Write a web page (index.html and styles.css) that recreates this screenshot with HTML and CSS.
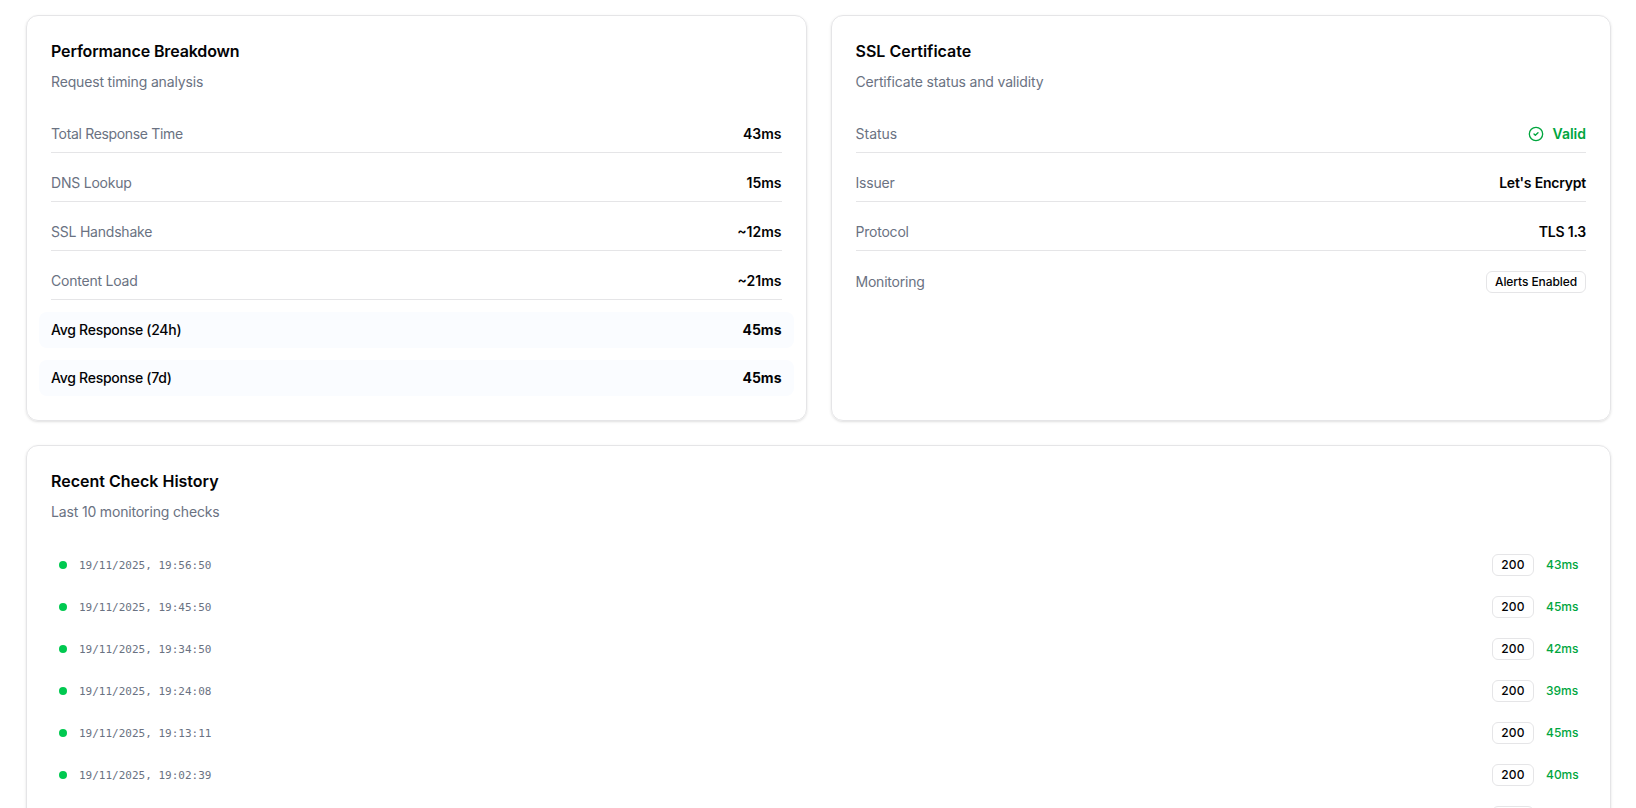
FILE: index.html
```html
<!DOCTYPE html>
<html lang="en">
<head>
    <meta charset="UTF-8">
    <meta name="viewport" content="width=device-width, initial-scale=1.0">
    <title>Monitor Details</title>
    <link rel="stylesheet" href="styles.css">
</head>
<body>
    <main>
        <div class="card-grid">
            <section class="card">
                <h2 class="tight">Performance Breakdown</h2>
                <p class="description">Request timing analysis</p>
                <div class="rows">
                    <div class="row line">
                        <span class="label narrow">Total Response Time</span>
                        <span class="value">43ms</span>
                    </div>
                    <div class="row line">
                        <span class="label">DNS Lookup</span>
                        <span class="value">15ms</span>
                    </div>
                    <div class="row line">
                        <span class="label">SSL Handshake</span>
                        <span class="value">~12ms</span>
                    </div>
                    <div class="row line">
                        <span class="label">Content Load</span>
                        <span class="value">~21ms</span>
                    </div>
                    <div class="row average">
                        <span class="average-label">Avg Response (24h)</span>
                        <span class="value">45ms</span>
                    </div>
                    <div class="row average">
                        <span class="average-label">Avg Response (7d)</span>
                        <span class="value">45ms</span>
                    </div>
                </div>
            </section>

            <section class="card">
                <h2>SSL Certificate</h2>
                <p class="description">Certificate status and validity</p>
                <div class="rows">
                    <div class="row line">
                        <span class="label status">Status</span>
                        <span class="value valid">
                            <svg width="16" height="16" viewBox="0 0 24 24" fill="none" stroke="currentColor" stroke-width="2" stroke-linecap="round" stroke-linejoin="round">
                                <circle cx="12" cy="12" r="10"/>
                                <path d="m9 12 2 2 4-4"/>
                            </svg>
                            Valid
                        </span>
                    </div>
                    <div class="row line">
                        <span class="label">Issuer</span>
                        <span class="value name">Let's Encrypt</span>
                    </div>
                    <div class="row line">
                        <span class="label">Protocol</span>
                        <span class="value name">TLS 1.3</span>
                    </div>
                    <div class="row">
                        <span class="label">Monitoring</span>
                        <span class="badge alerts">Alerts Enabled</span>
                    </div>
                </div>
            </section>
        </div>

        <section class="card">
            <h2>Recent Check History</h2>
            <p class="description">Last 10 monitoring checks</p>
            <ul class="checks">
                <li>
                    <span class="dot"></span>
                    <time>19/11/2025, 19:56:50</time>
                    <span class="badge code">200</span>
                    <span class="duration">43ms</span>
                </li>
                <li>
                    <span class="dot"></span>
                    <time>19/11/2025, 19:45:50</time>
                    <span class="badge code">200</span>
                    <span class="duration">45ms</span>
                </li>
                <li>
                    <span class="dot"></span>
                    <time>19/11/2025, 19:34:50</time>
                    <span class="badge code">200</span>
                    <span class="duration">42ms</span>
                </li>
                <li>
                    <span class="dot"></span>
                    <time>19/11/2025, 19:24:08</time>
                    <span class="badge code">200</span>
                    <span class="duration">39ms</span>
                </li>
                <li>
                    <span class="dot"></span>
                    <time>19/11/2025, 19:13:11</time>
                    <span class="badge code">200</span>
                    <span class="duration">45ms</span>
                </li>
                <li>
                    <span class="dot"></span>
                    <time>19/11/2025, 19:02:39</time>
                    <span class="badge code">200</span>
                    <span class="duration">40ms</span>
                </li>
                <li>
                    <span class="dot"></span>
                    <time></time>
                    <span class="badge code"></span>
                    <span class="duration"></span>
                </li>
            </ul>
        </section>
    </main>
</body>
</html>
```

FILE: styles.css
```css
* {
    box-sizing: border-box;
}

body {
    margin: 0;
    height: 100vh;
    overflow: hidden;
    background-color: #fff;
    color: #030305;
    font-family: Inter, "Liberation Sans", sans-serif;
    font-size: 14px;
    line-height: 20px;
}

main {
    display: flex;
    flex-direction: column;
    gap: 24px;
    padding: 15px 25px 0 26px;
}

.card-grid {
    display: grid;
    grid-template-columns: 1fr 1fr;
    gap: 24px;
}

.card {
    padding: 24px;
    border: 1px solid #e5e5e7;
    border-radius: 12px;
    box-shadow: 0 1px 3px rgba(0, 0, 0, 0.1), 0 1px 2px -1px rgba(0, 0, 0, 0.1);
}

h2 {
    margin: 0 0 10px;
    font-size: 16px;
    font-weight: 600;
    line-height: 22px;
}

h2.tight {
    letter-spacing: -0.14px;
}

.description {
    margin: 0 0 24px;
    color: #6a7282;
    letter-spacing: -0.16px;
}

.rows {
    display: flex;
    flex-direction: column;
    gap: 12px;
}

.row {
    display: flex;
    justify-content: space-between;
    align-items: center;
    padding: 8px 0;
}

.line {
    border-bottom: 1px solid #e5e5e7;
}

.label {
    color: #6a7282;
    letter-spacing: -0.22px;
}

.label.narrow {
    letter-spacing: -0.33px;
}

.label.status {
    letter-spacing: 0;
}

.value {
    font-weight: 600;
}

.value.name {
    letter-spacing: -0.22px;
}

.average {
    margin: 0 -12px;
    padding: 8px 12px;
    border-radius: 8px;
    background-color: #fafcff;
    font-weight: 500;
}

.average-label {
    letter-spacing: -0.27px;
}

.average .value {
    font-weight: 700;
}

.valid {
    display: flex;
    align-items: center;
    gap: 9px;
    color: #00a63e;
}

.badge {
    height: 22px;
    padding: 2px 8px;
    border: 1px solid #e5e5e7;
    border-radius: 6px;
    font-size: 12px;
    font-weight: 500;
    line-height: 16px;
}

.alerts {
    letter-spacing: -0.09px;
}

.code {
    width: 42px;
    text-align: center;
    letter-spacing: 0.2px;
}

.checks {
    display: flex;
    flex-direction: column;
    gap: 4px;
    margin: 0;
    padding: 0;
    list-style: none;
}

.checks li {
    display: flex;
    align-items: center;
    gap: 12px;
    padding: 8px;
}

.dot {
    width: 8px;
    height: 8px;
    border-radius: 50%;
    background-color: #00c950;
}

time {
    flex: 1;
    padding-top: 1px;
    color: #6a7282;
    font-family: "DejaVu Sans Mono", monospace;
    font-size: 11px;
    line-height: 17px;
}

.duration {
    width: 32px;
    color: #00a63e;
    font-size: 12px;
    font-weight: 500;
    line-height: 16px;
    text-align: right;
}
```
